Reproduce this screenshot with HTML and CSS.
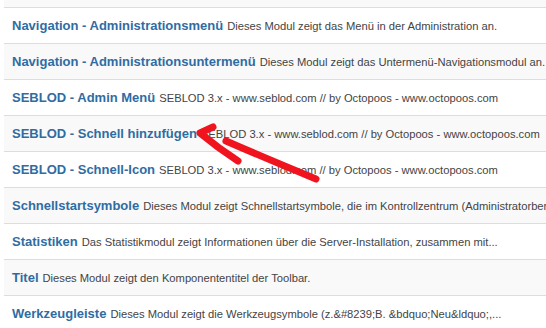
FILE: index.html
```html
<!DOCTYPE html>
<html lang="de">
<head>
    <meta charset="UTF-8">
    <title>Module</title>
    <link rel="stylesheet" href="styles.css">
</head>
<body>
    <div class="modules">
        <div class="row"></div>
        <div class="row"><a class="title">Navigation - Administrationsmenü</a> <span class="desc">Dieses Modul zeigt das Menü in der Administration an.</span></div>
        <div class="row"><a class="title">Navigation - Administrationsuntermenü</a> <span class="desc">Dieses Modul zeigt das Untermenü-Navigationsmodul an.</span></div>
        <div class="row"><a class="title">SEBLOD - Admin Menü</a> <span class="desc">SEBLOD 3.x - www.seblod.com // by Octopoos - www.octopoos.com</span></div>
        <div class="row"><a class="title">SEBLOD - Schnell hinzufügen</a> <span class="desc">SEBLOD 3.x - www.seblod.com // by Octopoos - www.octopoos.com</span></div>
        <div class="row"><a class="title">SEBLOD - Schnell-Icon</a> <span class="desc">SEBLOD 3.x - www.seblod.com // by Octopoos - www.octopoos.com</span></div>
        <div class="row"><a class="title">Schnellstartsymbole</a> <span class="desc">Dieses Modul zeigt Schnellstartsymbole, die im Kontrollzentrum (Administratorbereich) angezeigt werden.</span></div>
        <div class="row"><a class="title">Statistiken</a> <span class="desc">Das Statistikmodul zeigt Informationen über die Server-Installation, zusammen mit...</span></div>
        <div class="row"><a class="title">Titel</a> <span class="desc">Dieses Modul zeigt den Komponententitel der Toolbar.</span></div>
        <div class="row"><a class="title">Werkzeugleiste</a> <span class="desc">Dieses Modul zeigt die Werkzeugsymbole (z.&amp;#8239;B. &amp;bdquo;Neu&amp;ldquo;,...</span></div>
    </div>

    <svg class="arrow" width="546" height="328" viewBox="0 0 546 328">
        <path d="M213,127 L200,133 Q218,148 238,161" fill="none" stroke="#f0141e" stroke-width="7" stroke-linecap="round" stroke-linejoin="round"/>
        <path d="M226,141 Q265,158 316,179" fill="none" stroke="#f0141e" stroke-width="7" stroke-linecap="round"/>
    </svg>
</body>
</html>
```

FILE: styles.css
```css
body, html {
    margin: 0;
    padding: 0;
    background-color: #ffffff;
    font-family: "Liberation Sans", Arial, sans-serif;
    overflow: hidden;
}
.modules {
    margin-left: 4px;
    margin-top: -28px;
    width: 700px;
}
.row {
    height: 35px;
    border-bottom: 1px solid #dddddd;
    padding-left: 8px;
    display: flex;
    align-items: center;
    gap: 4px;
    white-space: nowrap;
}
.row:nth-child(odd) {
    background-color: #f9f9f9;
}
.title {
    color: #2f6ca3;
    font-size: 13px;
    font-weight: bold;
}
.desc {
    color: #444444;
    font-size: 11.2px;
}
.arrow {
    position: absolute;
    left: 0;
    top: 0;
}
```
